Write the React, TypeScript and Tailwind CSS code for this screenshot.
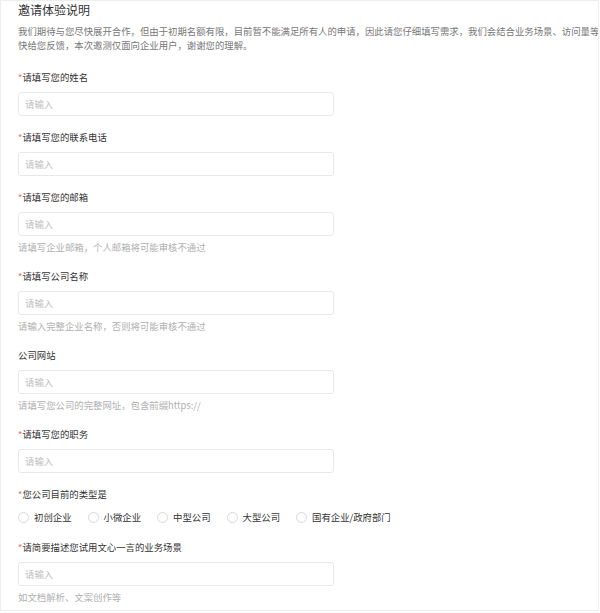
import React from "react";

const font = "font-['Noto_Sans_CJK_SC','Noto_Sans',sans-serif]";

function Label({ text, required = true }: { text: string; required?: boolean }) {
  return (
    <div className="h-[16px] leading-[16px] text-[9.4px] text-[#333333] whitespace-nowrap">
      {required && <span className="text-[#f56c6c]">*</span>}
      {text}
    </div>
  );
}

function Input() {
  return (
    <input
      placeholder="请输入"
      className={`mt-[7px] block h-[24px] w-[316px] rounded-[3px] border border-[#e8e8e8] bg-white pl-[6px] text-[9.4px] text-[#333] outline-none placeholder:text-[#c0c0c0] ${font}`}
    />
  );
}

function Hint({ text }: { text: string }) {
  return <div className="mt-[3px] h-[16px] leading-[16px] text-[9.4px] text-[#b0b0b0] whitespace-nowrap">{text}</div>;
}

function Field({ label, hint, required = true }: { label: string; hint?: string; required?: boolean }) {
  return (
    <div className="flex flex-col">
      <Label text={label} required={required} />
      <Input />
      {hint && <Hint text={hint} />}
    </div>
  );
}

const types = ["初创企业", "小微企业", "中型公司", "大型公司", "国有企业/政府部门"];

export default function App() {
  return (
    <div className={`h-[613px] w-[600px] overflow-hidden bg-white ${font}`}>
      <div className="h-[611px] w-[599px] overflow-hidden border border-[#eeeeee] pl-[17px]">
        <div className="h-[17px] leading-[17px] text-[12px] text-[#333333]">邀请体验说明</div>
        <div className="mt-[6px] text-[9.4px] leading-[14px] text-[#777777] whitespace-nowrap">
          <div>我们期待与您尽快展开合作，但由于初期名额有限，目前暂不能满足所有人的申请，因此请您仔细填写需求，我们会结合业务场景、访问量等综合评估，尽</div>
          <div>快给您反馈，本次邀测仅面向企业用户，谢谢您的理解。</div>
        </div>
        <div className="mt-[17px] flex flex-col gap-[13px]">
          <Field label="请填写您的姓名" />
          <Field label="请填写您的联系电话" />
          <Field label="请填写您的邮箱" hint="请填写企业邮箱，个人邮箱将可能审核不通过" />
          <Field label="请填写公司名称" hint="请输入完整企业名称，否则将可能审核不通过" />
          <Field label="公司网站" required={false} hint="请填写您公司的完整网址，包含前缀https://" />
          <Field label="请填写您的职务" />
          <div className="flex flex-col">
            <Label text="您公司目前的类型是" />
            <div className="mt-[6px] flex h-[18px] items-center">
              {types.map((t) => (
                <div key={t} className="mr-[16px] flex items-center">
                  <span className="h-[11px] w-[11px] rounded-full border border-[#d9d9d9] bg-white" />
                  <span className="ml-[5px] text-[9.4px] leading-[16px] text-[#333333] whitespace-nowrap">{t}</span>
                </div>
              ))}
            </div>
          </div>
          <Field label="请简要描述您试用文心一言的业务场景" hint="如文档解析、文案创作等" />
        </div>
      </div>
    </div>
  );
}
